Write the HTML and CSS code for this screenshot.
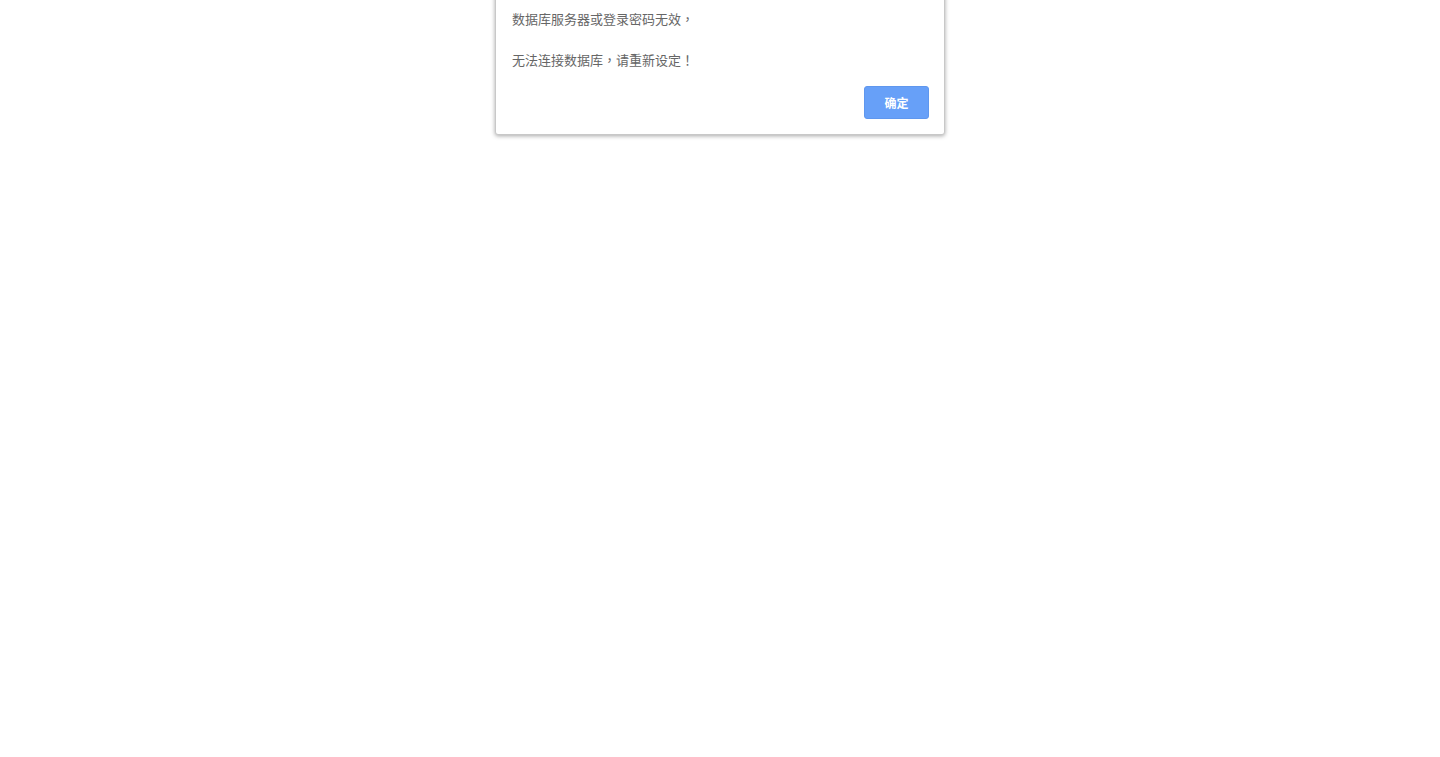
FILE: index.html
```html
<!DOCTYPE html>
<html lang="zh-CN">
<head>
<meta charset="utf-8">
<title>提示</title>
<link rel="stylesheet" href="styles.css">
</head>
<body>
<div class="modal">
  <div class="modal-body">
    <p class="msg">数据库服务器或登录密码无效<span class="punct" lang="zh-TW">，</span></p>
    <p class="msg">无法连接数据库<span class="punct" lang="zh-TW">，</span>请重新设定<span class="punct" lang="zh-TW">！</span></p>
  </div>
  <div class="modal-footer">
    <button class="btn-ok" type="button">确定</button>
  </div>
</div>
</body>
</html>
```
FILE: styles.css
```css
html, body {
  margin: 0;
  padding: 0;
  background: #fff;
}
body {
  font-family: "Noto Sans CJK SC", "Liberation Sans", sans-serif;
  width: 1440px;
  height: 757px;
  overflow: hidden;
}
.modal {
  position: absolute;
  left: 495px;
  top: -32px;
  width: 448px;
  border: 1px solid #c8c8c8;
  border-radius: 3px;
  background: #fff;
  box-shadow: 0 1px 4px rgba(0, 0, 0, 0.35);
}
.modal-body {
  padding: 40px 16px 0 16px;
}
.msg {
  margin: 0 0 21px 0;
  font-size: 13px;
  line-height: 20px;
  color: #666;
}
.msg:last-child {
  margin-bottom: 0;
}
.punct {
  font-family: "Noto Sans CJK TC", sans-serif;
}
.modal-footer {
  display: flex;
  justify-content: flex-end;
  padding: 16px 15px 15px 16px;
}
.btn-ok {
  width: 65px;
  height: 33px;
  border: 1px solid #5f97ee;
  border-radius: 3px;
  background: #67a0f8;
  color: #fff;
  font-family: "Noto Sans CJK SC", sans-serif;
  font-size: 12px;
  font-weight: bold;
  padding: 0;
}
```
